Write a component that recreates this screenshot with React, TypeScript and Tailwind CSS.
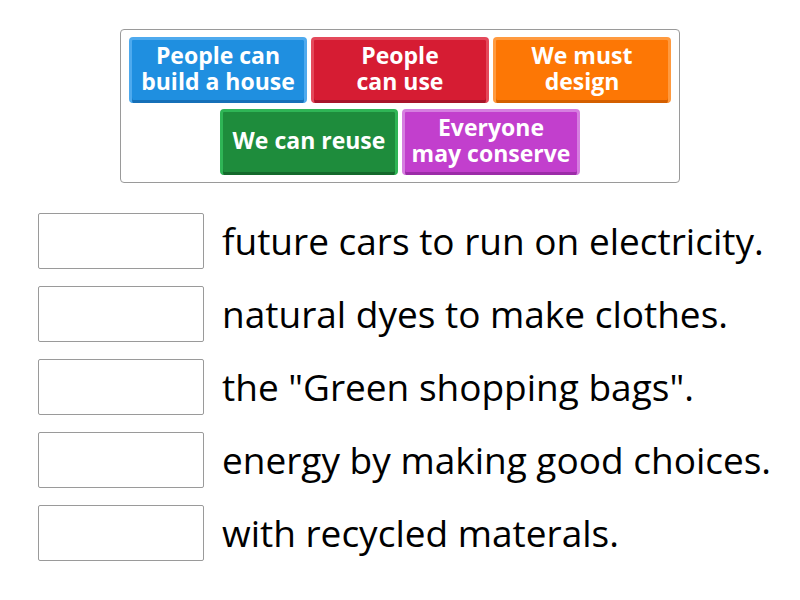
import React from "react";

const tiles = [
  { t: ["People can", "build a house"], c: "bg-[#1f8fe0] border-[#4eaaee] shadow-[inset_0_-3px_0_#1670b8]" },
  { t: ["People", "can use"], c: "bg-[#d61c33] border-[#e4495b] shadow-[inset_0_-3px_0_#a8142a]" },
  { t: ["We must", "design"], c: "bg-[#fd7705] border-[#ff9a3f] shadow-[inset_0_-3px_0_#d45f00]" },
  { t: ["We can reuse"], c: "bg-[#1e8c3c] border-[#2fb556] shadow-[inset_0_-3px_0_#14692c]" },
  { t: ["Everyone", "may conserve"], c: "bg-[#c23fcd] border-[#d67ee0] shadow-[inset_0_-3px_0_#9c2ca8]" },
];

const sentences = [
  "future cars to run on electricity.",
  "natural dyes to make clothes.",
  'the "Green shopping bags".',
  "energy by making good choices.",
  "with recycled materals.",
];

export default function App() {
  return (
    <div className="w-[800px] h-[600px] bg-white" style={{ fontFamily: '"Open Sans", "Noto Sans", sans-serif' }}>
      <div className="pt-[29px] flex justify-center">
        <div className="w-[560px] border border-[#9a9a9a] rounded-[4px] px-[7px] py-[7px] flex flex-wrap justify-center gap-x-[4px] gap-y-[6px]">
          {tiles.map((tile, i) => (
            <div
              key={i}
              className={`w-[178px] h-[66px] rounded-[4px] border-[3px] border-b-0 pb-[8px] ${tile.c} flex flex-col items-center justify-center text-white font-bold text-[23px] leading-[26px]`}
            >
              {tile.t.map((l, j) => (
                <span key={j} className="whitespace-nowrap">{l}</span>
              ))}
            </div>
          ))}
        </div>
      </div>
      <div className="mt-[30px] pl-[38px] flex flex-col gap-[17px]">
        {sentences.map((s, i) => (
          <div key={i} className="flex items-center">
            <div className="w-[166px] h-[56px] border border-[#9a9a9a] rounded-[2px] bg-white shrink-0" />
            <div className="ml-[18px] text-[37px] leading-[44px] text-black whitespace-nowrap">{s}</div>
          </div>
        ))}
      </div>
    </div>
  );
}
